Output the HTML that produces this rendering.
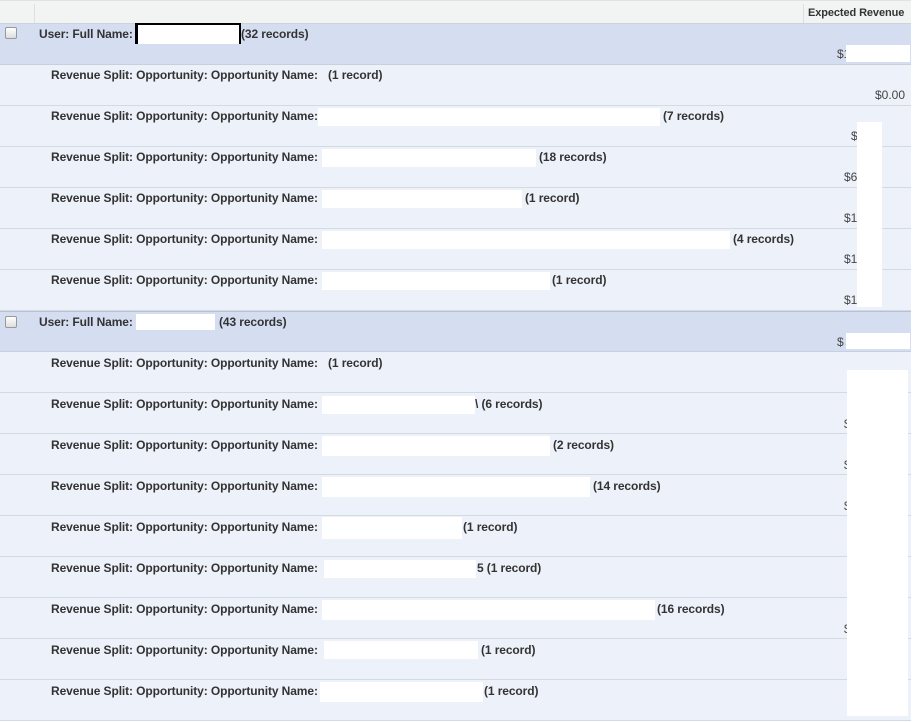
<!DOCTYPE html><html><head><style>
*{margin:0;padding:0;box-sizing:border-box}
body{width:916px;height:722px;background:#fff;position:relative;overflow:hidden;font-family:"Liberation Sans",Arial,sans-serif;font-size:12px;color:#333}
.a{position:absolute}
.hd{left:0;top:0;width:911px;height:24px;background:#f2f3f3;border-top:1px solid #e0e3e5;border-bottom:1px solid #ccd3dd}
.g{left:0;width:911px;height:41px;background:#d5ddf0;border-bottom:1px solid #c8d0dc}
.s{left:0;width:911px;height:41px;background:#edf1f9;border-bottom:1px solid #d4dae2}
.t{font-weight:bold;white-space:nowrap;letter-spacing:-0.1px}
.w{background:#fff}
.cb{width:12px;height:12px;border:1px solid #999;border-radius:2px;background:linear-gradient(#fff,#ddd)}
.m{color:#444;font-size:12px}
</style></head><body>
<div class="a hd"></div>
<div class="a" style="left:34px;top:4px;width:1px;height:19px;background:#dde0e3"></div>
<div class="a" style="left:803px;top:4px;width:1px;height:19px;background:#dde0e3"></div>
<div class="a t" style="left:808px;top:7px;font-size:11px">Expected Revenue</div>

<div class="a g" style="top:24px"></div>
<div class="a cb" style="left:5px;top:27px"></div>
<div class="a t" style="left:39px;top:27px">User: Full Name:</div>
<div class="a w" style="left:135px;top:23px;width:106px;height:21px;border-left:3px solid #000;border-right:2px solid #000;border-top:2px solid #000"></div>
<div class="a t" style="left:241px;top:27px">(32 records)</div>
<div class="a m" style="left:837px;top:47px">$1</div>
<div class="a w" style="left:846px;top:45px;width:64px;height:17px"></div>

<div class="a s" style="top:65px"></div>
<div class="a s" style="top:106px"></div>
<div class="a s" style="top:147px"></div>
<div class="a s" style="top:188px"></div>
<div class="a s" style="top:229px"></div>
<div class="a s" style="top:270px"></div>
<div class="a g" style="top:311px;border-top:1px solid #b8c2d4"></div>
<div class="a s" style="top:352px"></div>
<div class="a s" style="top:393px"></div>
<div class="a s" style="top:434px"></div>
<div class="a s" style="top:475px"></div>
<div class="a s" style="top:516px"></div>
<div class="a s" style="top:557px"></div>
<div class="a s" style="top:598px"></div>
<div class="a s" style="top:639px"></div>
<div class="a s" style="top:680px"></div>

<div class="a t" style="left:51px;top:68px">Revenue Split: Opportunity: Opportunity Name:</div>
<div class="a t" style="left:328px;top:68px">(1 record)</div>
<div class="a m" style="left:875px;top:88px">$0.00</div>

<div class="a t" style="left:51px;top:109px">Revenue Split: Opportunity: Opportunity Name:</div>
<div class="a w" style="left:318px;top:108px;width:342px;height:18px"></div>
<div class="a t" style="left:663px;top:109px">(7 records)</div>
<div class="a t" style="left:51px;top:150px">Revenue Split: Opportunity: Opportunity Name:</div>
<div class="a w" style="left:322px;top:149px;width:214px;height:18px"></div>
<div class="a t" style="left:539px;top:150px">(18 records)</div>
<div class="a t" style="left:51px;top:191px">Revenue Split: Opportunity: Opportunity Name:</div>
<div class="a w" style="left:322px;top:190px;width:200px;height:18px"></div>
<div class="a t" style="left:525px;top:191px">(1 record)</div>
<div class="a t" style="left:51px;top:232px">Revenue Split: Opportunity: Opportunity Name:</div>
<div class="a w" style="left:322px;top:231px;width:408px;height:18px"></div>
<div class="a t" style="left:733px;top:232px">(4 records)</div>
<div class="a t" style="left:51px;top:273px">Revenue Split: Opportunity: Opportunity Name:</div>
<div class="a w" style="left:322px;top:272px;width:228px;height:18px"></div>
<div class="a t" style="left:552px;top:273px">(1 record)</div>
<div class="a m" style="left:851px;top:129px">$</div>
<div class="a m" style="left:844px;top:170px">$6</div>
<div class="a m" style="left:844px;top:211px">$1</div>
<div class="a m" style="left:844px;top:252px">$1</div>
<div class="a m" style="left:844px;top:293px">$1</div>
<div class="a w" style="left:857px;top:122px;width:25px;height:185px"></div>

<div class="a cb" style="left:5px;top:316px"></div>
<div class="a t" style="left:39px;top:315px">User: Full Name:</div>
<div class="a w" style="left:136px;top:314px;width:79px;height:16px"></div>
<div class="a t" style="left:219px;top:315px">(43 records)</div>
<div class="a m" style="left:837px;top:335px">$</div>
<div class="a w" style="left:846px;top:333px;width:64px;height:16px"></div>

<div class="a t" style="left:51px;top:356px">Revenue Split: Opportunity: Opportunity Name:</div>
<div class="a t" style="left:328px;top:356px">(1 record)</div>
<div class="a t" style="left:51px;top:397px">Revenue Split: Opportunity: Opportunity Name:</div>
<div class="a w" style="left:322px;top:396px;width:153px;height:18px"></div>
<div class="a t" style="left:475px;top:397px">\ (6 records)</div>
<div class="a t" style="left:51px;top:438px">Revenue Split: Opportunity: Opportunity Name:</div>
<div class="a w" style="left:322px;top:436px;width:228px;height:20px"></div>
<div class="a t" style="left:553px;top:438px">(2 records)</div>
<div class="a t" style="left:51px;top:479px">Revenue Split: Opportunity: Opportunity Name:</div>
<div class="a w" style="left:322px;top:477px;width:268px;height:20px"></div>
<div class="a t" style="left:593px;top:479px">(14 records)</div>
<div class="a t" style="left:51px;top:520px">Revenue Split: Opportunity: Opportunity Name:</div>
<div class="a w" style="left:322px;top:517px;width:140px;height:22px"></div>
<div class="a t" style="left:463px;top:520px">(1 record)</div>
<div class="a t" style="left:51px;top:561px">Revenue Split: Opportunity: Opportunity Name:</div>
<div class="a w" style="left:324px;top:560px;width:152px;height:18px"></div>
<div class="a t" style="left:477px;top:561px">5 (1 record)</div>
<div class="a t" style="left:51px;top:602px">Revenue Split: Opportunity: Opportunity Name:</div>
<div class="a w" style="left:322px;top:600px;width:333px;height:20px"></div>
<div class="a t" style="left:657px;top:602px">(16 records)</div>
<div class="a t" style="left:51px;top:643px">Revenue Split: Opportunity: Opportunity Name:</div>
<div class="a w" style="left:324px;top:641px;width:154px;height:18px"></div>
<div class="a t" style="left:481px;top:643px">(1 record)</div>
<div class="a t" style="left:51px;top:684px">Revenue Split: Opportunity: Opportunity Name:</div>
<div class="a w" style="left:320px;top:682px;width:163px;height:20px"></div>
<div class="a t" style="left:484px;top:684px">(1 record)</div>
<div class="a m" style="left:844px;top:417px">$</div>
<div class="a m" style="left:844px;top:458px">$</div>
<div class="a m" style="left:844px;top:499px">$</div>
<div class="a m" style="left:844px;top:622px">$</div>
<div class="a w" style="left:847px;top:370px;width:61px;height:346px"></div>
</body></html>
